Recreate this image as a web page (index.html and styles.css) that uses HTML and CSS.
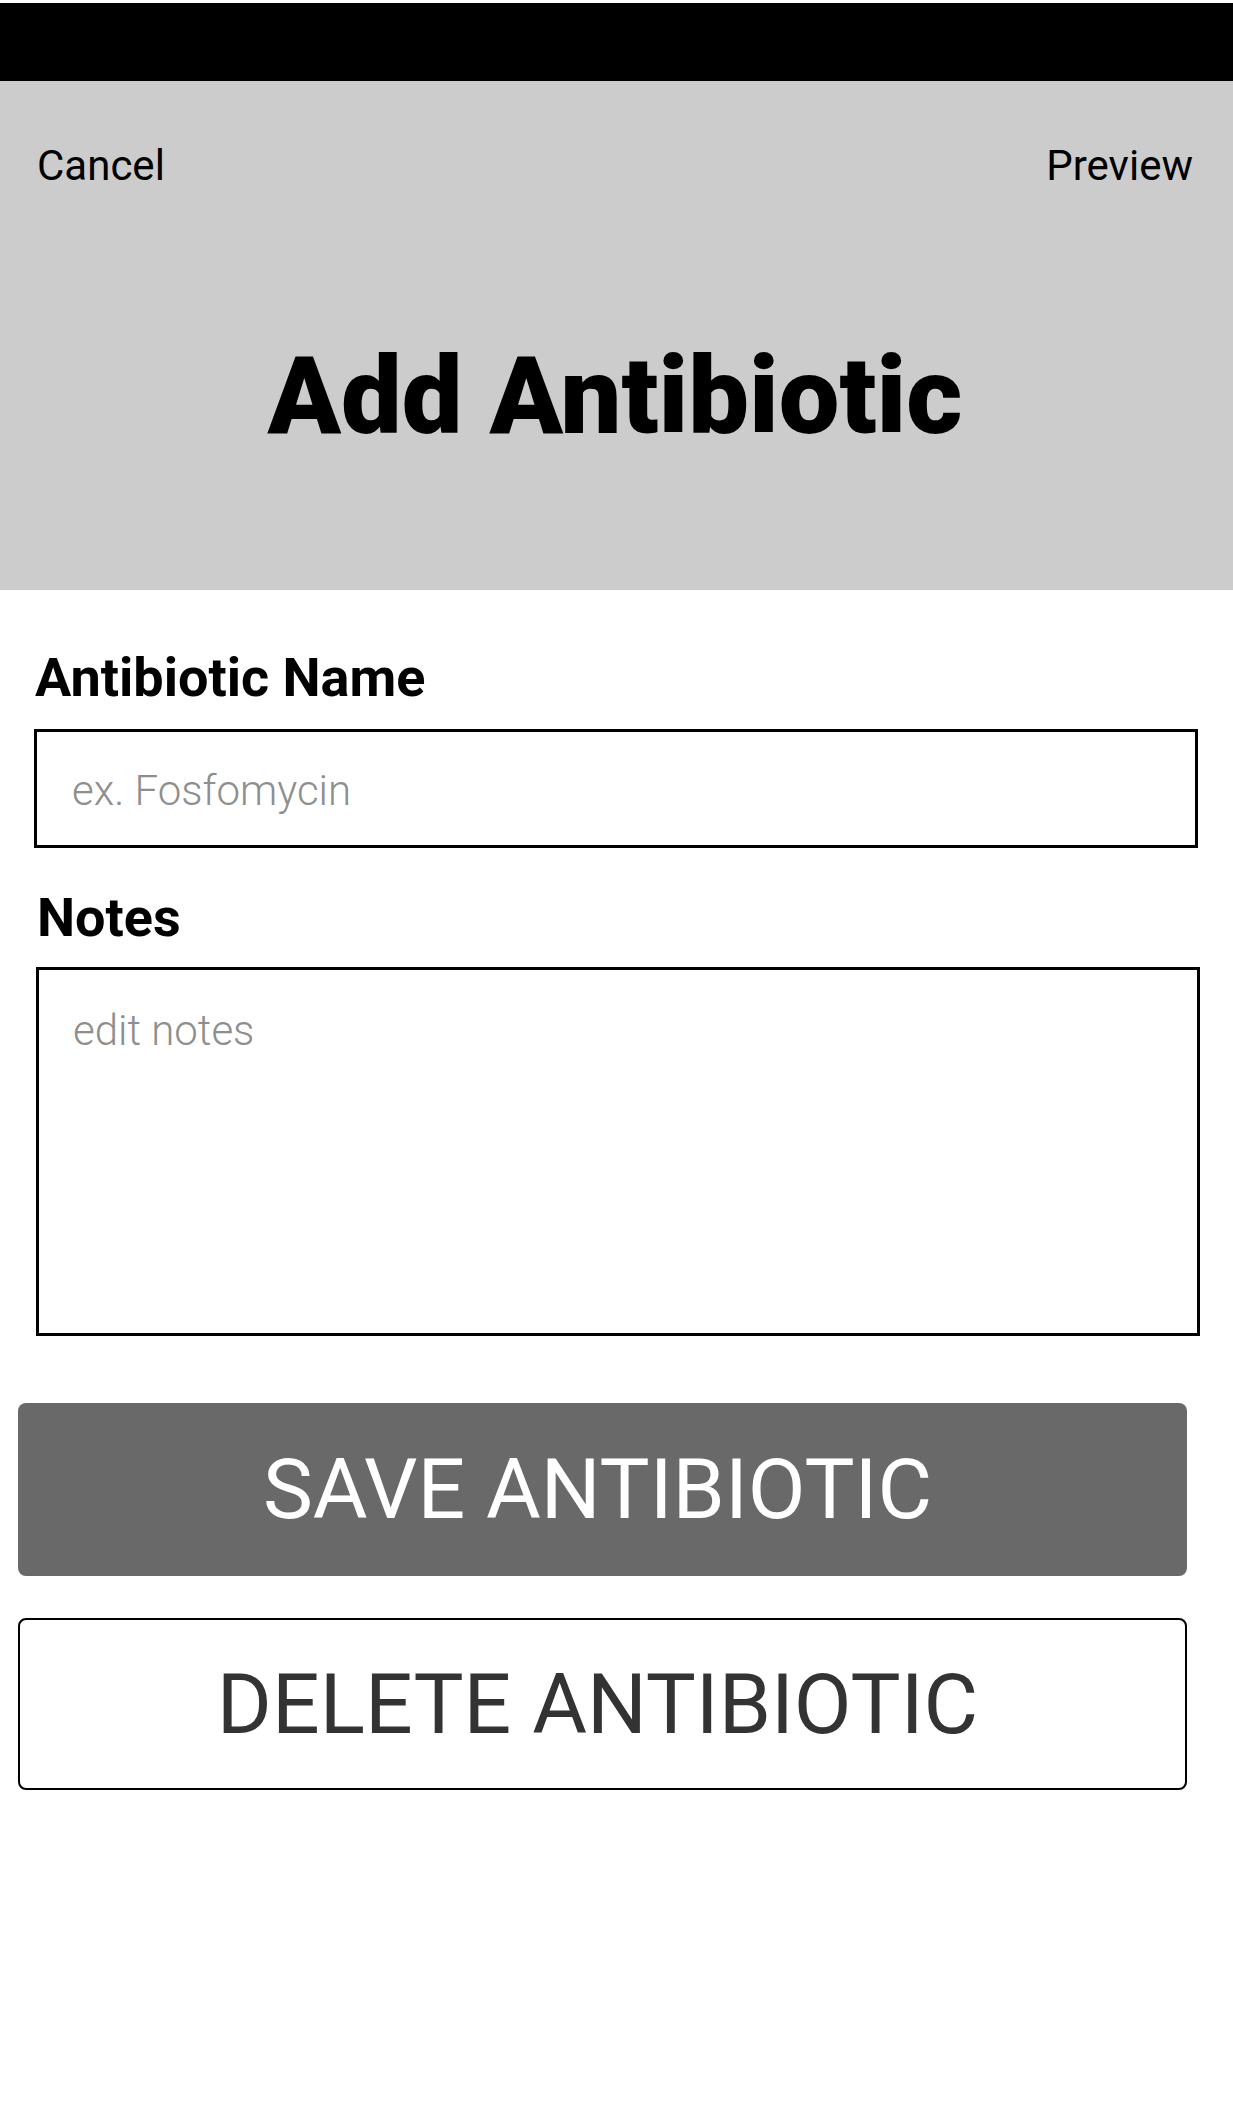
FILE: index.html
```html
<!DOCTYPE html>
<html lang="en">
<head>
<meta charset="utf-8">
<title>Add Antibiotic</title>
<link rel="stylesheet" href="styles.css">
</head>
<body>
<div class="status-bar"></div>
<header class="header">
  <nav class="nav">
    <span class="nav-link">Cancel</span>
    <span class="nav-link">Preview</span>
  </nav>
  <h1 class="title">Add Antibiotic</h1>
</header>
<main class="form">
  <div class="field">
    <label class="label" for="name">Antibiotic Name</label>
    <input class="input" id="name" type="text" placeholder="ex. Fosfomycin">
  </div>
  <div class="field field-notes">
    <label class="label" for="notes">Notes</label>
    <textarea class="textarea" id="notes" placeholder="edit notes"></textarea>
  </div>
</main>
<div class="actions">
  <button class="btn btn-save" type="button">SAVE ANTIBIOTIC</button>
  <button class="btn btn-delete" type="button">DELETE ANTIBIOTIC</button>
</div>
</body>
</html>
```
FILE: styles.css
```css
* { box-sizing: border-box; }
html, body { margin: 0; padding: 0; background: #ffffff; }
body {
  font-family: Roboto, "Liberation Sans", sans-serif;
  color: #000;
  padding-top: 3px;
}
.status-bar {
  height: 78px;
  background: #000;
}
.header {
  background: #cccccc;
  height: 509px;
  padding: 60px 40px 0 37px;
}
.nav {
  display: flex;
  justify-content: space-between;
  align-items: center;
}
.nav-link {
  font-size: 42px;
  line-height: 50px;
  font-weight: 400;
  color: #000;
}
.title {
  margin: 145px 0 0 0;
  text-align: center;
  font-size: 108px;
  line-height: 120px;
  font-weight: 900;
}
.form {
  padding: 56px 35px 0 34px;
}
.field {
  display: flex;
  flex-direction: column;
}
.field-notes {
  margin-top: 38px;
  margin-left: 2px;
  margin-right: -2px;
}
.label {
  font-size: 54px;
  line-height: 64px;
  font-weight: 700;
  padding-left: 1px;
  margin-bottom: 19px;
}
.field-notes .label {
  margin-bottom: 17px;
}
.input, .textarea {
  font-family: Roboto, "Liberation Sans", sans-serif;
  font-weight: 300;
  font-size: 42px;
  border: 3px solid #000;
  border-radius: 0;
  background: #fff;
  outline: none;
  width: 100%;
  margin: 0;
  color: #000;
}
.input {
  height: 119px;
  padding: 4px 20px 0 35px;
}
.textarea {
  height: 369px;
  padding: 36px 20px 0 34px;
  line-height: normal;
  resize: none;
}
.input::placeholder, .textarea::placeholder {
  color: #8e8e8e;
  opacity: 1;
}
.actions {
  display: flex;
  flex-direction: column;
  gap: 42px;
  padding: 67px 46px 0 18px;
}
.btn {
  display: flex;
  align-items: center;
  justify-content: center;
  width: 100%;
  font-family: Roboto, "Liberation Sans", sans-serif;
  font-size: 84px;
  font-weight: 400;
  border-radius: 8px;
  margin: 0;
  padding: 0 10px 0 0;
  cursor: pointer;
}
.btn-save {
  height: 173px;
  background: #696969;
  color: #ffffff;
  border: none;
}
.btn-delete {
  height: 172px;
  background: #ffffff;
  color: #333333;
  border: 2px solid #000;
}
```
